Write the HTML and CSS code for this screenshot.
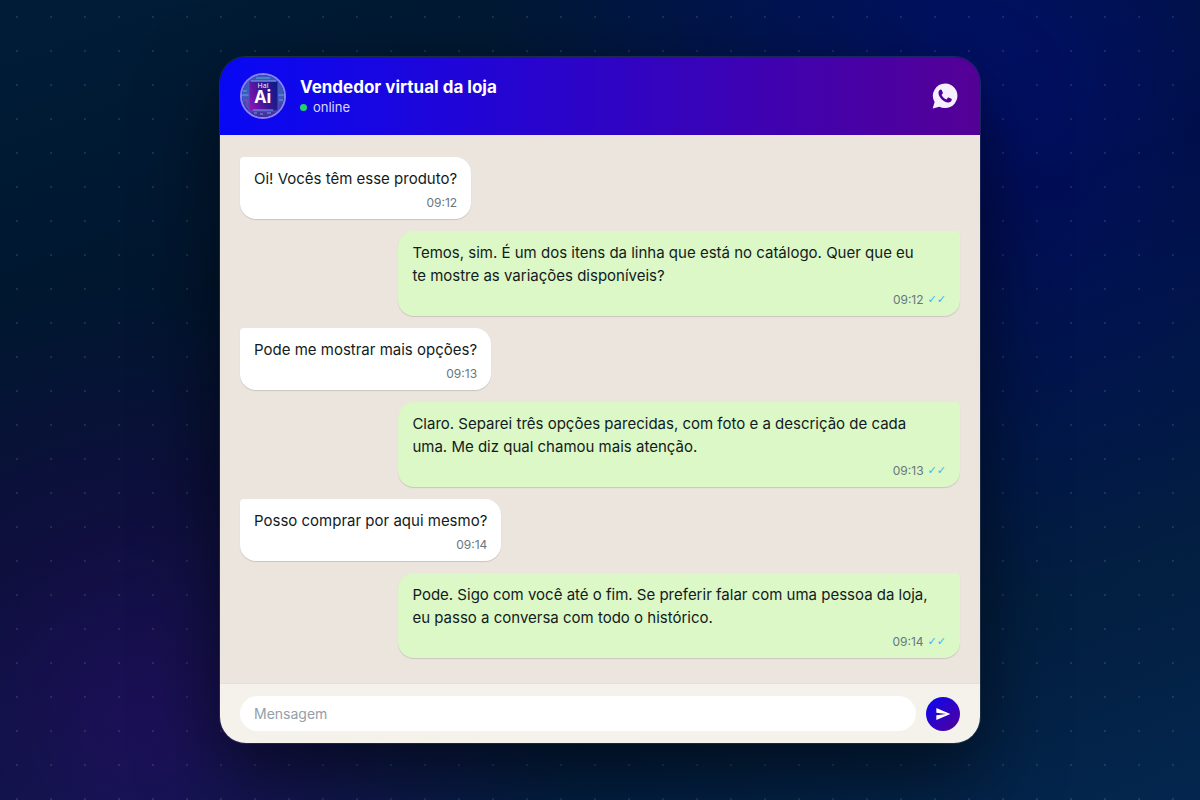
FILE: index.html
```html
<!DOCTYPE html>
<html lang="pt-BR">

<head>
    <meta charset="UTF-8">
    <meta name="viewport" content="width=device-width, initial-scale=1.0">
    <title>Vendedor virtual da loja</title>
    <link rel="stylesheet" href="styles.css">
</head>

<body>

    <main class="chat">
        <header class="chat-header">
            <div class="avatar">
                <svg class="avatar-art" viewBox="0 0 42 42" aria-hidden="true">
                    <defs>
                        <linearGradient id="chip" x1="0" y1="0.7" x2="1" y2="0.3">
                            <stop offset="0" stop-color="#8a14b4" />
                            <stop offset="0.5" stop-color="#3a1794" />
                            <stop offset="1" stop-color="#101a86" />
                        </linearGradient>
                        <linearGradient id="board" x1="0" y1="0" x2="0" y2="1">
                            <stop offset="0" stop-color="#3558b8" />
                            <stop offset="0.5" stop-color="#3c5cb8" />
                            <stop offset="1" stop-color="#4a2a9a" />
                        </linearGradient>
                    </defs>
                    <rect width="42" height="42" fill="url(#board)" />
                    <path d="M0 20h7M36 20h6M1 16h4M37 25h4M14 3h14M12 38h3M18 39h3M25 38h4" stroke="#5aa6e4" fill="none" />
                    <path d="M1 25h4v6l3 4" stroke="#9a3fc4" fill="none" />
                    <rect x="7" y="6" width="29" height="30" fill="url(#chip)" stroke="#4a55c8" />
                    <path d="M9 6h25M11 35h20" stroke="#7f9cf0" />
                </svg>
                <span class="avatar-text"><small>Hal</small><b>Ai</b></span>
            </div>
            <div class="contact">
                <h1>Vendedor virtual da loja</h1>
                <p class="status">online</p>
            </div>
            <svg class="whatsapp" viewBox="0 0 26 26" role="img" aria-label="WhatsApp">
                <path fill="#f5efff" fill-rule="evenodd" d="M13.2 .5A12.3 12.3 0 0 0 2.6 19L.7 25.5l6.7-1.8A12.3 12.3 0 1 0 13.2 .5zM8.6 6.6c.6-.1 1 .1 1.2.6l1 2.4c.2.5 0 .8-.3 1.2l-.9 1.1c1.1 2.2 2.6 3.6 4.9 4.5l1.2-1.5c.3-.4.7-.5 1.1-.3l2.5 1.2c.4.2.5.4.4.9-.2 1.9-1.7 2.9-3.6 2.8C11.5 19 6.7 14.5 6.5 10c0-1.5.8-3 2.1-3.4z" />
            </svg>
        </header>

        <section class="messages">
            <article class="bubble received">
                <p>Oi! Vocês têm esse produto?</p>
                <div class="meta"><time>09:12</time></div>
            </article>
            <article class="bubble sent">
                <p>Temos, sim. É um dos itens da linha que está no catálogo. Quer que eu<br>te mostre as variações disponíveis?</p>
                <div class="meta"><time>09:12</time><span class="checks">✓✓</span></div>
            </article>
            <article class="bubble received">
                <p>Pode me mostrar mais opções?</p>
                <div class="meta"><time>09:13</time></div>
            </article>
            <article class="bubble sent">
                <p>Claro. Separei três opções parecidas, com foto e a descrição de cada<br>uma. Me diz qual chamou mais atenção.</p>
                <div class="meta"><time>09:13</time><span class="checks">✓✓</span></div>
            </article>
            <article class="bubble received">
                <p>Posso comprar por aqui mesmo?</p>
                <div class="meta"><time>09:14</time></div>
            </article>
            <article class="bubble sent">
                <p>Pode. Sigo com você até o fim. Se preferir falar com uma pessoa da loja,<br>eu passo a conversa com todo o histórico.</p>
                <div class="meta"><time>09:14</time><span class="checks">✓✓</span></div>
            </article>
        </section>

        <form class="composer">
            <input type="text" class="field" placeholder="Mensagem" aria-label="Mensagem">
            <button type="button" class="send" aria-label="Enviar">
                <svg viewBox="0 0 24 24" aria-hidden="true">
                    <path fill="#fff" d="M2 21l21-9L2 3v7l15 2-15 2z" />
                </svg>
            </button>
        </form>
    </main>

</body>

</html>
```

FILE: styles.css
```css
* {
    box-sizing: border-box;
}

body {
    display: flex;
    align-items: center;
    justify-content: center;
    min-height: 100vh;
    margin: 0;
    padding: 20px;
    font-family: Inter, "Liberation Sans", sans-serif;
    color: #111b21;
    /* Dot grid over two glows */
    background:
        radial-gradient(circle, rgba(255, 255, 255, 0.1) 1px, transparent 1px) 0 0 / 34px 34px,
        radial-gradient(circle at 82% 12%, rgba(0, 0, 255, 0.28), transparent 42%),
        radial-gradient(circle at 12% 90%, rgba(75, 0, 150, 0.36), transparent 34%),
        linear-gradient(160deg, #001d38 0%, #001229 46%, #04264e 100%);
}

.chat {
    width: 100%;
    max-width: 760px;
    overflow: hidden;
    border-radius: 26px;
    box-shadow: 0 0 0 1px rgba(255, 255, 255, 0.1), 0 30px 80px rgba(0, 0, 0, 0.55);
}

/* Header */
.chat-header {
    display: flex;
    align-items: center;
    gap: 14px;
    padding: 16px 20px;
    background: linear-gradient(90deg, #0808f5, #540096);
    color: #fff;
}

.avatar {
    display: grid;
    flex: none;
    width: 46px;
    height: 46px;
    overflow: hidden;
    border: 2px solid #8a82f0;
    border-radius: 50%;
}

.avatar-art,
.avatar-text {
    grid-area: 1 / 1;
    width: 100%;
    height: 100%;
}

.avatar-text {
    display: flex;
    flex-direction: column;
    align-items: center;
    padding-top: 7px;
    font-family: "Open Sans", sans-serif;
}

.avatar-text small {
    font-size: 7px;
    line-height: 7px;
}

.avatar-text b {
    font-size: 17px;
    line-height: 16px;
}

.contact {
    flex: 1;
    padding-top: 2px;
}

.contact h1 {
    margin: 0;
    font-size: 17px;
    font-weight: 700;
    line-height: 20px;
}

.status {
    display: flex;
    align-items: center;
    gap: 6px;
    margin: 0;
    font-size: 13px;
    line-height: 20px;
    color: rgba(255, 255, 255, 0.85);
}

.status::before {
    content: "";
    width: 7px;
    height: 7px;
    border-radius: 50%;
    background: #25d366;
}

.whatsapp {
    width: 30px;
    height: 26px;
}

/* Messages */
.messages {
    display: flex;
    flex-direction: column;
    gap: 12px;
    padding: 22px 20px 25px;
    background: #ece5de;
}

.bubble {
    max-width: 78%;
    padding: 10px 14px 8px;
    border-radius: 16px;
    box-shadow: 0 1px 1px rgba(0, 0, 0, 0.14);
}

.received {
    align-self: flex-start;
    border-top-left-radius: 4px;
    background: #fff;
}

.sent {
    align-self: flex-end;
    width: 78%;
    border-top-right-radius: 4px;
    background: #dcf8c6;
}

.bubble p {
    margin: 0;
    font-size: 15px;
    line-height: 23px;
}

.meta {
    display: flex;
    justify-content: flex-end;
    gap: 4px;
    margin-top: 4px;
    font-size: 12px;
    line-height: 17px;
    color: #667781;
}

.checks {
    font-family: "DejaVu Sans", sans-serif;
    font-size: 11px;
    color: #34b7f1;
}

/* Composer */
.composer {
    display: flex;
    align-items: center;
    gap: 10px;
    padding: 12px 20px;
    border-top: 1px solid #e6e0d8;
    background: #f5f2eb;
}

.field {
    flex: 1;
    min-width: 0;
    height: 35px;
    padding: 0 14px;
    border: 0;
    border-radius: 18px;
    background: #fff;
    font-family: inherit;
    font-size: 14px;
    color: inherit;
}

.field::placeholder {
    color: #94a0a8;
}

.send {
    display: flex;
    align-items: center;
    justify-content: center;
    flex: none;
    width: 34px;
    height: 34px;
    padding: 0;
    border: 0;
    border-radius: 50%;
    background: linear-gradient(135deg, #0808f5, #540096);
    cursor: pointer;
}

.send svg {
    width: 16px;
    height: 16px;
}
```
